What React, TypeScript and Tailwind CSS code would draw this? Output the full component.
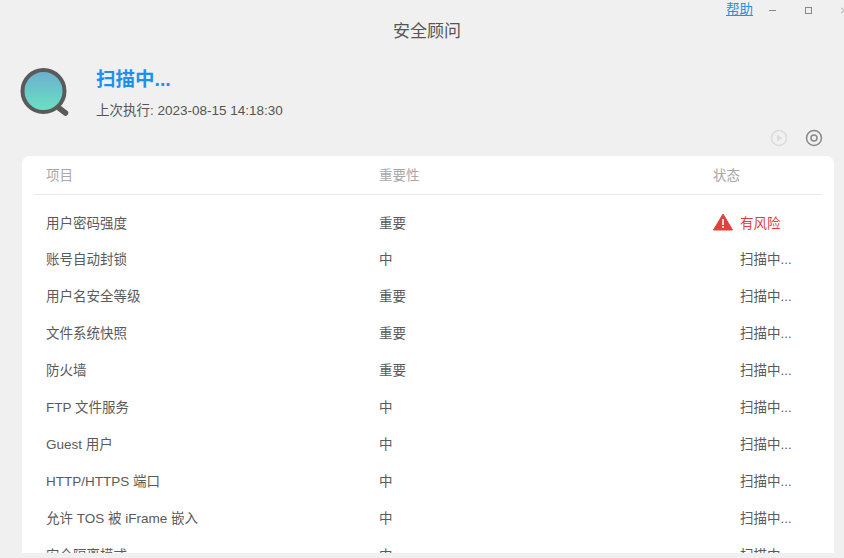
const rows: [string, string, boolean][] = [
  ["用户密码强度", "重要", true],
  ["账号自动封锁", "中", false],
  ["用户名安全等级", "重要", false],
  ["文件系统快照", "重要", false],
  ["防火墙", "重要", false],
  ["FTP 文件服务", "中", false],
  ["Guest 用户", "中", false],
  ["HTTP/HTTPS 端口", "中", false],
  ["允许 TOS 被 iFrame 嵌入", "中", false],
  ["安全隔离模式", "中", false],
];

export default function App() {
  return (
    <div
      className="flex h-[558px] w-[844px] flex-col overflow-hidden bg-[#f0f0f0] text-[#555]"
      style={{ fontFamily: '"Liberation Sans", "Noto Sans CJK SC", sans-serif' }}
    >
      <div className="relative h-[62px] shrink-0">
        <div className="pl-[10px] pt-[21px] text-center text-[17px] leading-[22px] text-[#555]">安全顾问</div>
        <div className="absolute right-0 top-0 flex h-[20px] items-center">
          <a className="text-[13.5px] leading-[20px] text-[#2a8fe0] underline">帮助</a>
          <span className="ml-[16px] h-px w-[7px] bg-[#888]" />
          <span className="ml-[29px] h-[7px] w-[7px] border border-[#888]" />
          <svg width="3" height="7" viewBox="0 0 3 7" className="ml-[29px]">
            <path d="M0 0.5 L3 3.5 M0 6.5 L3 3.5" stroke="#999" strokeWidth="1" fill="none" />
          </svg>
        </div>
      </div>

      <div className="flex h-[64px] shrink-0 pl-[20px]">
        <svg width="50" height="52" viewBox="0 0 50 52" className="mt-[6px]">
          <defs>
            <linearGradient id="lens" x1="0" y1="0" x2="0" y2="1">
              <stop offset="0" stopColor="#6cadd0" />
              <stop offset="1" stopColor="#68e4c0" />
            </linearGradient>
          </defs>
          <circle cx="23.5" cy="23" r="21" fill="url(#lens)" stroke="#5a5a5a" strokeWidth="4" />
          <path d="M39 40 L45.5 45" stroke="#5a5a5a" strokeWidth="5.5" strokeLinecap="round" />
        </svg>
        <div className="ml-[26px]">
          <div className="mt-[4px] text-[19.5px] font-bold leading-[26px] text-[#1c90ee]">扫描中...</div>
          <div className="mt-[9px] text-[13.5px] leading-[20px] text-[#555]">上次执行: 2023-08-15 14:18:30</div>
        </div>
      </div>

      <div className="flex h-[30px] shrink-0 items-center justify-end gap-[17px] pb-[6px] pr-[21px]">
        <svg width="18" height="18" viewBox="0 0 18 18" fill="none">
          <circle cx="9" cy="9" r="7.5" stroke="#dcdcdc" strokeWidth="1.5" />
          <path d="M7 5.5 L12 9 L7 12.5 Z" fill="#dcdcdc" />
        </svg>
        <svg width="18" height="18" viewBox="0 0 18 18" fill="none">
          <circle cx="9" cy="9" r="7.5" stroke="#888" strokeWidth="1.5" />
          <circle cx="9" cy="9" r="3" stroke="#888" strokeWidth="1.5" />
        </svg>
      </div>

      <div className="mb-[5px] ml-[22px] mr-[10px] min-h-0 flex-1 overflow-hidden rounded-t-[8px] bg-white px-[12px]">
        <div className="grid h-[39px] grid-cols-[333px_334px_1fr] items-center border-b border-[#e8e8e8] pl-[12px] pt-[3px] text-[13.5px] text-[#a8a8a8]">
          <span>项目</span>
          <span>重要性</span>
          <span>状态</span>
        </div>
        <div className="pt-[10.2px]">
          {rows.map(([name, level, risk]) => (
            <div key={name} className="grid h-[36.9px] grid-cols-[333px_334px_1fr] items-center pl-[12px] text-[13.5px] text-[#5a5a5a]">
              <span>{name}</span>
              <span>{level}</span>
              {risk ? (
                <span className="flex items-center text-[#e23b3b]">
                  <svg width="20" height="18" viewBox="0 0 20 18" className="mb-[4px] mr-[7px]">
                    <path d="M10 1 L19.5 17 L0.5 17 Z" fill="#e2403c" stroke="#e2403c" strokeLinejoin="round" />
                    <rect x="9.2" y="6" width="1.6" height="6" fill="#fff" />
                    <rect x="9.2" y="13" width="1.6" height="2" fill="#fff" />
                  </svg>
                  有风险
                </span>
              ) : (
                <span className="pl-[27px]">扫描中...</span>
              )}
            </div>
          ))}
        </div>
      </div>
    </div>
  );
}
